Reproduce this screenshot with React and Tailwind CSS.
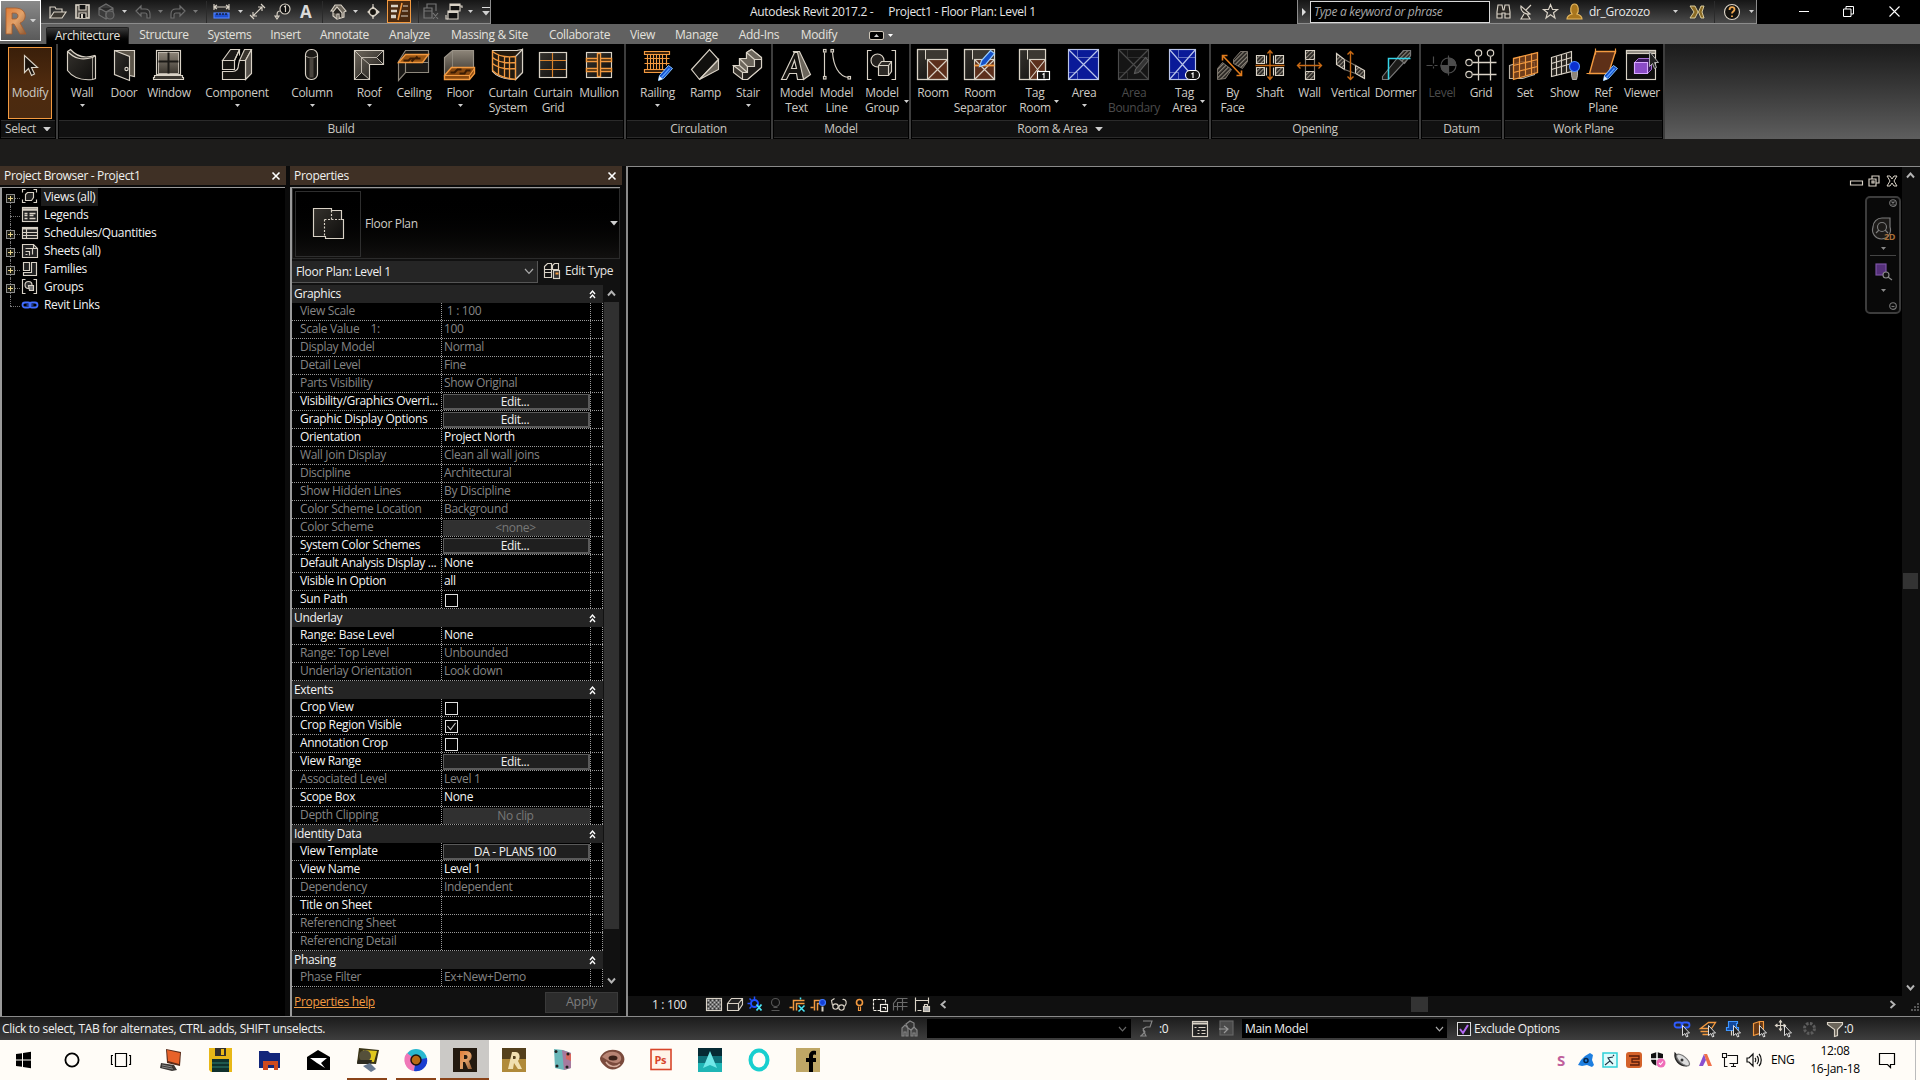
import React from "react";

const L = "#d9d2c6";
const O = "#f39a40";

/* ---------- shared bits ---------- */

function Ico({ s = 32, w, h, className = "", children, vb }) {
  return (
    <svg
      width={w || s}
      height={h || s}
      viewBox={vb || `0 0 ${w || s} ${h || s}`}
      fill="none"
      stroke={L}
      strokeWidth="1.150"
      className={"shrink-0 overflow-visible " + className}
    >
      {children}
    </svg>
  );
}

function Down({ className = "", color = "#cfcfcf", w = 6 }) {
  return (
    <svg width={w} height={w / 2 + 0.5} viewBox="0 0 6 3.5" className={"shrink-0 " + className}>
      <path d="M0 0h6L3 3.5z" fill={color} />
    </svg>
  );
}

function Pencil() {
  return (
    <g>
      <path d="M27 17l4 3-9 10-5 2 1-5z" fill="#1450c8" stroke="#8cc8ff" strokeWidth="1" />
      <path d="M28 20l-8 9" stroke="#5aa0ff" strokeWidth="1.300" />
      <path d="M18 27.500l3 3-4 1.500z" fill="#e8f4ff" stroke="none" />
    </g>
  );
}

function Defs() {
  return (
    <svg width="0" height="0" className="absolute">
      <defs>
        <linearGradient id="metal" x1="0" y1="0" x2="1" y2="1">
          <stop offset="0" stopColor="#6f685d" />
          <stop offset="1" stopColor="#1c1a18" />
        </linearGradient>
        <linearGradient id="dark" x1="0" y1="0" x2="1" y2="1">
          <stop offset="0" stopColor="#35322d" />
          <stop offset="1" stopColor="#0e0d0c" />
        </linearGradient>
        <linearGradient id="light" x1="0" y1="0" x2="0" y2="1">
          <stop offset="0" stopColor="#8d8579" />
          <stop offset="1" stopColor="#3a352e" />
        </linearGradient>
        <linearGradient id="bronze" x1="0" y1="0" x2="1" y2="1">
          <stop offset="0" stopColor="#e07c36" />
          <stop offset="0.5" stopColor="#e2a26a" />
          <stop offset="1" stopColor="#8f5a34" />
        </linearGradient>
        <pattern id="hatch" width="3" height="3" patternUnits="userSpaceOnUse" patternTransform="rotate(45)">
          <rect width="3" height="3" fill="#24211e" />
          <rect width="1.2" height="3" fill="#8e877c" />
        </pattern>
      </defs>
    </svg>
  );
}

/* ---------- ribbon icons, 32 x 32 ---------- */

const roomBox = (w = 30) => (
  <g>
    <rect x="1" y="1" width={w} height="30" fill="url(#dark)" />
    <rect x="9" y="1" width={w - 8} height="10" fill="#3c3832" stroke="none" />
    <path d="M9 1v10" strokeWidth="1" />
    <rect x="11" y="11" width={w - 10} height="20" fill="#5c2f1c" />
    <path d={`M11 11L${w + 1} 31M${w + 1} 11L11 31`} />
    <rect x="1" y="1" width={w} height="30" />
  </g>
);

const areaBox = (w, fill, c) => (
  <g stroke={c}>
    <rect x="1" y="1" width={w} height="30" fill={fill} />
    <path d={`M1 1l${w} 30M${w + 1} 1L1 31`} />
    <path d={`M10 1v8M10 9h${w - 9}M10 31v-7M1 24h9`} strokeWidth="0.7" opacity="0.7" />
  </g>
);

const icons = {
  modify: <path d="M11 7v17l4-4 3 7 3-1.500-3-6.500h6z" fill="#1a120c" />,
  wall: (
    <g>
      <path d="M2 3l3-2c7 8 15 9 24 6l1 1v22l-3 1C16 32 7 29 2 22z" fill="url(#dark)" />
      <path d="M2 3c7 7 14 9 25 6l3-2" />
      <path d="M27 9v22" strokeWidth="0.700" />
    </g>
  ),
  door: (
    <g>
      <path d="M7 2h20v26l-5-1" fill="#5c5549" />
      <path d="M7 2l15 6v24L7 26z" fill="url(#dark)" />
      <circle cx="19" cy="20.500" r="1.600" fill="#111" />
    </g>
  ),
  window: (
    <g>
      <rect x="4" y="2" width="24" height="24" fill="#15130f" />
      <rect x="6" y="4" width="20" height="21" fill="url(#light)" strokeWidth="0.800" />
      <path d="M16 4v21M6 13h20" stroke="#1c1a17" strokeWidth="2" />
      <path d="M2 27h28v2h1v2H1v-2h1z" fill="#3a3630" />
    </g>
  ),
  component: (
    <g>
      <path d="M2 12L10 1h9l-5 11z" fill="#1c1a18" />
      <path d="M19 12L24 1h7L25 12z" fill="#3a352e" />
      <path d="M25 12L31 1v24l-6 6z" fill="#55504a" />
      <path d="M2 12h12v9H2z" fill="#14120f" />
      <path d="M2 23h10c5 0 6-3 6-7l1-4h6v19H2z" fill="#14120f" />
      <path d="M14 12l5-11v6" />
    </g>
  ),
  column: (
    <g>
      <rect x="10" y="1" width="12" height="30" rx="5.500" fill="#1a1815" />
      <path d="M10 7c2 3 10 3 12 0" strokeWidth="0.700" />
      <rect x="14" y="9" width="4" height="20" fill="#4a453e" stroke="none" />
    </g>
  ),
  roof: (
    <g>
      <path d="M2 2h29v14H17v15H2z" fill="url(#metal)" />
      <path d="M2 31l7-7 8 7zM31 2l-7 7 7 7z" fill="#1a1815" strokeWidth="0.800" />
      <path d="M2 2l7 7v15M9 9h15M9 9l8 7" strokeWidth="0.800" />
    </g>
  ),
  ceiling: (
    <g>
      <path d="M1 13l7-11h23v22H8l-7 8z" fill="#191816" stroke="#8e887d" />
      <path d="M8 24V14h23" stroke="#8e887d" />
      <path d="M1 14L8 6h23l-6 8z" fill="#9a5512" stroke={O} strokeWidth="1.400" />
      <path d="M6 12h5l2-2h5l2-2M14 13l3-3h6" stroke="#3a1c04" strokeWidth="2" />
    </g>
  ),
  floor: (
    <g>
      <path d="M1 27V9l8-7h21v18H9z" fill="url(#light)" stroke="#9a9388" />
      <path d="M9 2v18" stroke="#9a9388" strokeWidth="0.700" />
      <path d="M1 27l7-8h23v6l-5 6H1z" fill="#8a4a10" stroke={O} strokeWidth="1.400" />
      <path d="M1 27h25l5-7M26 27v4" stroke={O} />
      <path d="M7 24h4l3-3h4M16 25h5l2-3h4" stroke="#3a1c04" strokeWidth="2" />
    </g>
  ),
  csystem: (
    <g>
      <path d="M1 2h24l6-1v23l-7 7C14 31 6 29 1 23z" fill="#22190e" />
      <path d="M24 8v23l7-7V1zM1 2h25" fill="#2b2824" />
      <path
        d="M1 3c6 5 14 6 23 5M1 9c6 5 14 6 23 5M1 15c6 5 14 6 23 5M1 22c6 6 14 8 23 9M1 2v20M7 6v21M13 8v21M18 8v22M24 8v23"
        stroke={O}
        strokeWidth="1.300"
      />
    </g>
  ),
  cgrid: (
    <g>
      <rect x="3" y="4" width="27" height="25" fill="url(#dark)" />
      <path d="M16 4v25M3 12h27M3 21h27" stroke="#d9822c" />
      <path d="M3 4h27v25H3z" />
    </g>
  ),
  mullion: (
    <g>
      <rect x="4" y="4" width="25" height="25" fill="url(#dark)" />
      <path d="M4 10h25v3H4zM4 20h25v3H4z" stroke={O} fill="#3a2208" strokeWidth="1.400" />
      <rect x="15" y="5" width="3" height="23" fill="#3a2208" stroke={O} strokeWidth="1.400" />
    </g>
  ),
  railing: (
    <g>
      <path d="M3 3h25v3H3zM3 10h25M3 15h25M3 21h20v3H3z" stroke={O} fill="#3a2008" />
      <path d="M6 6v15M9 6v15M12 6v15M15 6v15M18 6v15M21 6v15M25 6v11" stroke={O} />
      <Pencil />
    </g>
  ),
  ramp: (
    <g>
      <path d="M2 21L20 1l9 10-19 20z" fill="#11100e" />
      <path d="M10 31L29 11v10z" fill="#6b655b" />
    </g>
  ),
  stair: (
    <g>
      <path d="M2 17h6v-7h7V4l5-3 10 8v10L16 31h-5l-9-7z" fill="#3a352e" />
      <path d="M2 17l9 7h5v-6h7v-7h7V9L20 1l-5 3v6H8v7z" fill="#6b655b" />
      <path d="M8 10l8 8M15 4l8 7M8 17l8 7M11 24v7M11 24h5v-6h7v-7h7v8L16 31h-5z" fill="#1e1b18" />
    </g>
  ),
  mtext: (
    <g>
      <path d="M13 3h6l11 23-7 5-9-26z" fill="#6b655b" />
      <path d="M1 31L14 4h3l6 27h-6l-1-6h-7l-3 6zM11 20h5l-2-8z" fill="#14120f" />
    </g>
  ),
  mline: (
    <g>
      <path d="M4 4v24M12 4c1 13 6 24 16 25" />
      <g fill="#111">
        <rect x="3" y="1" width="2.500" height="2.500" />
        <rect x="3" y="28" width="2.500" height="2.500" />
        <rect x="10.500" y="1" width="2.500" height="2.500" />
        <rect x="27.500" y="28" width="2.500" height="2.500" />
      </g>
    </g>
  ),
  mgroup: (
    <g>
      <path d="M6 2H2v29h4M26 2h4v29h-4" />
      <circle cx="12" cy="12" r="6.500" fill="#24211e" />
      <path d="M13 17l3-4h10v10l-3 4H13z" fill="#2c2925" />
      <path d="M13 17h10v10M23 17l3-4" />
    </g>
  ),
  room: roomBox(30),
  roomsep: (
    <g>
      {roomBox(30)}
      <path d="M11 17h20" stroke={O} strokeWidth="1.800" />
      <path d="M27 2l4 3-9 11-6 2 2-6z" fill="#1450c8" stroke="#9cd0ff" />
    </g>
  ),
  tagroom: (
    <g>
      {roomBox(26)}
      <rect x="19" y="23" width="12" height="8" fill="#111" stroke="#fff" />
      <path d="M24 26l1.500-1v5" stroke="#fff" />
    </g>
  ),
  area: areaBox(30, "#0a1a98", "#b9c4ea"),
  areab: (
    <g>
      {areaBox(30, "#151515", "#4a4a4a")}
      <path d="M28 9l3 3-10 12-4 1 1-4z" fill="#333" stroke="#5a5a5a" />
    </g>
  ),
  tagarea: (
    <g>
      {areaBox(26, "#0a1a98", "#b9c4ea")}
      <rect x="17" y="22" width="14" height="9" rx="4.500" fill="#111" stroke="#fff" />
      <path d="M23 25.500l1.500-1v5" stroke="#fff" />
    </g>
  ),
  byface: (
    <g>
      <path d="M17 11l7-8h7v10l-5 7-9-5zM1 31V20l5-6 9 7-6 9z" fill="url(#hatch)" stroke="#8e877c" strokeWidth="0.800" />
      <path d="M6 7l19 20M6 12V7h5M20 27h5v-5" stroke="#e07b1c" strokeWidth="1.600" />
    </g>
  ),
  shaft: (
    <g>
      <g fill="url(#hatch)">
        <path d="M3 7h8v8H3zM22 7h8v8h-8zM3 19h8v8H3zM22 19h8v8h-8z" />
      </g>
      <path d="M13 7v8M20 7v8M13 19v8M20 19v8" />
      <path d="M16.500 2v29M2 17h29M14 5l2.500-3L19 5M14 28l2.500 3 2.500-3" stroke="#c96a14" strokeWidth="1.300" />
    </g>
  ),
  owall: (
    <g>
      <path d="M12 2h9v9h-9zM12 23h9v8h-9z" fill="url(#hatch)" />
      <path d="M12 11v12M21 11v12" stroke="#7a746a" />
      <path d="M4 17h24M7 14l-3 3 3 3M25 14l3 3-3 3" stroke="#c96a14" strokeWidth="1.400" />
    </g>
  ),
  vertical: (
    <g>
      <path d="M2 5l8 6v10l-8-5zM21 17l9 5v8l-9-5z" fill="url(#hatch)" />
      <path d="M10 11l11 6M10 21l11 4" stroke="#7a746a" />
      <path d="M16 3v28M13 6l3-3 3 3M13 28l3 3 3-3" stroke="#c96a14" strokeWidth="1.400" />
    </g>
  ),
  dormer: (
    <g>
      <path d="M3 28L24 2h7v5L9 31H3z" fill="#1b1a18" stroke="#777" />
      <path d="M18 9l6-7h7v5l-6 8z" fill="url(#hatch)" stroke="#777" />
      <path d="M9 31V10h22" stroke="#35d4e8" strokeWidth="1.500" />
    </g>
  ),
  level: (
    <g stroke="#4c4c4c">
      <circle cx="23" cy="17" r="7.500" />
      <path d="M23 9.500a7.500 7.500 0 017.500 7.500H23zM23 24.500a7.500 7.500 0 01-7.500-7.500H23z" fill="#4c4c4c" />
      <path d="M1 17h6M9 17h3M23 7v20M8 8v7M8 18v2" />
    </g>
  ),
  grid: (
    <g>
      <path d="M14 8v24M26 8v24M8 14h24M8 26h24" strokeWidth="1.300" />
      <g fill="#0a0a0a">
        <circle cx="14" cy="4.500" r="3.200" />
        <circle cx="26" cy="4.500" r="3.200" />
        <circle cx="4.500" cy="14" r="3.200" />
        <circle cx="4.500" cy="26" r="3.200" />
      </g>
    </g>
  ),
  set: (
    <g>
      <path d="M1 17l12-4 13 1v12l-12 4H1z" fill="#3a2418" stroke="#b9b1a4" />
      <path d="M5 10l24-6v20L5 31z" fill="#7a421c" fillOpacity="0.850" stroke={O} strokeWidth="1.300" />
      <path d="M11 8v21M17 7v20M23 5v21M5 17l24-6M5 24l24-6" stroke={O} />
    </g>
  ),
  show: (
    <g>
      <path d="M3 9l20-6v20L3 28z" fill="#24211d" />
      <path d="M8 8v19M13 6v20M18 5v19M3 15l20-6M3 21l20-6" />
      <path d="M23 22h6v5l-1 4h-4l-1-4z" fill="#8d8579" stroke="#ccc" strokeWidth="0.800" />
      <circle cx="26" cy="18" r="5" fill="#0a2fd0" stroke="#4f8dff" />
    </g>
  ),
  refplane: (
    <g>
      <path d="M9 3h20l-7 22H3z" fill="#5e3018" stroke={O} strokeWidth="1.400" />
      <path d="M9 0v6M29 0v5M0 25h6" stroke={O} />
      <Pencil />
    </g>
  ),
  viewer: (
    <g>
      <rect x="1" y="2" width="29" height="29" fill="#0f0e0d" />
      <rect x="1" y="2" width="29" height="3" fill="#8f8a80" />
      <path d="M9 14l4-4h13v11l-4 4H9z" fill="#3b1a5c" stroke="#c98aff" strokeWidth="0.800" />
      <path d="M9 14h13v11H9z" fill="#8b4cc6" stroke="#d9a8ff" />
      <path d="M24 3v15l3-3 2 5 2-1-2-5h4z" fill="#222" stroke="#bbb" strokeWidth="0.900" />
    </g>
  ),
};

function RibbonBtn({ icon, l1, l2, arrow, side, off, w }) {
  return (
    <div className={`relative flex shrink-0 flex-col items-center pt-[5px] ${w} ${off ? "text-[#4b4b4b]" : "text-[#cdcac4]"}`}>
      <Ico vb="0.5 0.5 32 32">{icons[icon]}</Ico>
      <div className="mt-[4px] flex flex-col items-center whitespace-nowrap leading-[15px]">
        <span>{l1}</span>
        {l2 && <span>{l2}</span>}
      </div>
      {arrow && <Down w={5} className="mt-[4px]" />}
      {side && <Down w={5} className={`absolute top-[56px] ${side}`} />}
    </div>
  );
}

function RibbonPanel({ title, w, menu, children }) {
  return (
    <div className={`flex h-[95px] shrink-0 flex-col border-r-2 border-[#3d3d3d] bg-black ${w}`}>
      <div className="flex h-[76px]">{children}</div>
      <div className="mx-px flex h-[18px] items-center justify-center gap-[7px] border-b border-t border-[#2b2b2b] bg-[#111111] text-[#c9c6c0]">
        {title}
        {menu && <Down w={8} />}
      </div>
    </div>
  );
}

/* ---------- title bar ---------- */

const Sep = ({ className = "" }) => <div className={`h-[22px] w-px bg-[#2b2b2b] ${className}`} />;

function QuickAccess() {
  return (
    <div className="flex h-6 w-[450px] items-center border-b border-r border-[#8c8c8c] bg-linear-to-b from-[#161616] to-[#4b4b4b]">
      <div className="box-content flex w-[24px] justify-center pl-[5px]">
        <Ico w={18} h={16}>
          <path d="M1 14V3h5l1 2h6v3" />
          <path d="M1 14L5 8h12l-4 6z" fill="#3a3630" />
        </Ico>
      </div>
      <div className="flex w-[25px] justify-center">
        <Ico s={15}>
          <rect x="1" y="1" width="13" height="13" fill="#55504a" strokeWidth="1.600" />
          <path d="M4 1v5h7V1M4 14V9h7v5" fill="#111" />
          <rect x="6" y="10" width="2" height="4" fill={L} stroke="none" />
        </Ico>
      </div>
      <div className="flex w-[24px] justify-center">
        <Ico s={17}>
          <g stroke="#6d6d6d">
            <path d="M1 5l7-4 7 4v7l-7 4-7-4zM1 5l7 4 7-4M8 9v7" fill="#3a3a3a" />
            <circle cx="12" cy="12" r="4" fill="#444" />
          </g>
        </Ico>
      </div>
      <div className="flex w-[12px] justify-center"><Down w={5} /></div>
      <div className="flex w-[24px] justify-center">
        <Ico w={16} h={14}><path d="M1 6l5-5v3h4c4 0 5 3 5 5v4h-3v-3c0-2-1-2-2-2H6v3z" stroke="#6d6d6d" fill="#2a2a2a" /></Ico>
      </div>
      <div className="flex w-[12px] justify-center"><Down w={5} color="#777" /></div>
      <div className="flex w-[24px] justify-center">
        <Ico w={16} h={14}><path d="M15 6l-5-5v3H6C2 4 1 7 1 9v4h3v-3c0-2 1-2 2-2h4v3z" stroke="#6d6d6d" fill="#2a2a2a" /></Ico>
      </div>
      <div className="flex w-[11px] justify-center"><Down w={5} color="#777" /></div>
      <Sep className="ml-[5px]" />
      <div className="flex w-[29px] justify-center">
        <Ico s={17}>
          <path d="M1 4h15M1 1v6M16 1v6M4 2L1 4l3 2M13 2l3 2-3 2" />
          <rect x="1" y="10" width="15" height="5" fill="#1e4fd0" stroke="#4f83ff" />
          <path d="M4 10v2M7 10v2M10 10v2M13 10v2" stroke="#111" />
        </Ico>
      </div>
      <div className="flex w-[8px] justify-center"><Down w={5} /></div>
      <div className="flex w-[28px] justify-center">
        <Ico s={17}><path d="M4 13L13 4M9 4h4v4M4 9v4h4M1 12l4 4M12 1l4 4" /></Ico>
      </div>
      <div className="flex w-[22px] justify-center">
        <Ico s={17}>
          <circle cx="11" cy="6" r="5" fill="#111" />
          <path d="M10 4l1.500-1v6M6 8c-3 0-3 2-3 6" />
          <path d="M1 13h4l-2 3z" />
        </Ico>
      </div>
      <div className="flex w-[24px] justify-center font-['Open_Sans'] text-[17px] font-bold leading-none text-[#d9d9d9]">A</div>
      <Sep className="ml-[4px]" />
      <div className="flex w-[31px] justify-center">
        <Ico s={17}>
          <path d="M1 8l4-6h6l5 6-2 1v5l-7 2-4-3V8z" fill="#6b655b" />
          <path d="M3 9l4-5 5 6v5M7 15v-4h2v5" fill="#26231f" />
        </Ico>
      </div>
      <div className="flex w-[4px] justify-center"><Down w={5} /></div>
      <div className="flex w-[32px] justify-center">
        <Ico w={15} h={17}>
          <path d="M2 9l5-5 6 5-6 5z" fill={L} />
          <circle cx="7" cy="9" r="3.500" fill="#15130f" />
          <path d="M7 1v3M7 14v2" />
        </Ico>
      </div>
      <div className="-ml-[2px] flex h-[23px] w-[24px] items-center justify-center border border-[#f39a40] bg-[#4a2a10]">
        <Ico s={19}>
          <path d="M1 4h7M1 9h6" strokeWidth="2.500" />
          <path d="M1 14.500h5" strokeWidth="3.500" />
          <path d="M13 4h5M12 9h6M11 14h7" />
          <path d="M12 1L8 18" stroke={O} strokeWidth="1.500" />
        </Ico>
      </div>
      <Sep className="ml-[7px]" />
      <div className="ml-[2px] flex w-[20px] justify-center">
        <Ico s={17}>
          <g stroke="#777"><path d="M4 5V1h9v7M1 5h8v10H1zM1 8h8M10 10l5 6M15 10l-5 6" /></g>
        </Ico>
      </div>
      <div className="flex w-[25px] justify-center">
        <Ico w={18} h={18}>
          <path d="M5 1h10v7H5z" fill="#111" />
          <path d="M3 8h10v8H3z" fill="#111" />
          <path d="M3 9h10M5 2h10" strokeWidth="2" />
          <path d="M15 3h2v2M1 12v4h2" />
        </Ico>
      </div>
      <div className="flex w-[9px] justify-center"><Down w={5} /></div>
      <div className="ml-[7px] flex flex-col items-center gap-[3px]">
        <div className="h-px w-[8px] bg-[#ddd]" />
        <Down w={8} />
      </div>
    </div>
  );
}

function SearchArea() {
  return (
    <div className="flex h-6 w-[460px] items-center border border-t-0 border-[#8c8c8c] bg-linear-to-b from-[#161616] to-[#4b4b4b]">
      <div className="flex w-[12px] justify-center">
        <svg width="4" height="8"><path d="M0 0l4 4-4 4z" fill="#ddd" /></svg>
      </div>
      <div className="flex h-[22px] w-[180px] items-center border border-[#d9d9d9] bg-black pl-[3px] italic text-[#a8a8a8]">
        Type a keyword or phrase
      </div>
      <div className="ml-px flex w-[24px] justify-center">
        <Ico s={17}><path d="M2 9l1-7h4l1 5h1l1-5h4l1 7v6h-5v-5H7v5H2zM2 11h5M10 11h5" fill="#2b2824" /></Ico>
      </div>
      <div className="flex w-[23px] justify-center">
        <Ico s={17}><path d="M3 3c-1 5 4 9 9 8zM8 7l5-5M6 11l-3 5h9l-3-5" fill="#2b2824" /></Ico>
      </div>
      <div className="flex w-[24px] justify-center">
        <Ico s={17}><path d="M8.500 1.500l2 5h5l-4 3.200 1.500 5.300-4.500-3.200L4 15l1.500-5.300-4-3.200h5z" /></Ico>
      </div>
      <div className="flex w-[25px] justify-center">
        <Ico s={17}>
          <path d="M1 16c0-3 2-4 5-5-2-2-2-10 2.500-10S13 9 11 11c3 1 5 2 5 5z" fill="#a8761e" stroke="#e5b860" />
        </Ico>
      </div>
      <span className="ml-[2px] w-[80px] text-[#e8e8e8]">dr_Grozozo</span>
      <div className="flex w-[12px] justify-center"><Down w={5} /></div>
      <div className="flex w-[32px] justify-center">
        <Ico s={16}>
          <path d="M1 2h5l3 6-3 6H1l4-6zM15 2h-3L9.500 8l2.500 6h3l-2-6z" fill="#8a6a24" stroke="#e5d8a8" strokeWidth="0.900" />
        </Ico>
      </div>
      <Sep className="ml-[1px]" />
      <div className="flex w-[34px] justify-center">
        <Ico s={18}>
          <circle cx="9" cy="9" r="7.500" fill="#15130f" />
          <path d="M6.500 7c0-4 5-3.500 5-.5 0 2-2.500 2-2.500 4M9 12.500v1.500" stroke="#f0a850" strokeWidth="1.800" />
        </Ico>
      </div>
      <Down w={5} />
    </div>
  );
}

function TitleBar() {
  return (
    <div className="flex h-6 bg-black">
      <div className="w-[41px]" />
      <QuickAccess />
      <div className="ml-[259px] flex h-[23px] w-[547px] items-center gap-[15px] whitespace-pre text-[#e6e6e6]">
        <span>Autodesk Revit 2017.2 -</span>
        <span>Project1 - Floor Plan: Level 1</span>
      </div>
      <SearchArea />
      <div className="flex flex-1 items-center pb-[2px] pl-[41px]">
        <div className="flex w-[11px] justify-center"><div className="h-px w-[10px] bg-white" /></div>
        <Ico s={11} className="ml-[34px]"><path d="M.5 3h7.500v7.500H.5zM3 3V.5h7.500V8H8" stroke="#fff" strokeWidth="1" /></Ico>
        <Ico s={11} className="ml-[35px]"><path d="M.5.5l10 10M10.500.5l-10 10" stroke="#fff" strokeWidth="1.100" /></Ico>
      </div>
    </div>
  );
}

const tabs = [
  ["Structure", "w-[68px]"],
  ["Systems", "w-[63px]"],
  ["Insert", "w-[49px]"],
  ["Annotate", "w-[69px]"],
  ["Analyze", "w-[61px]"],
  ["Massing & Site", "w-[99px]"],
  ["Collaborate", "w-[81px]"],
  ["View", "w-[45px]"],
  ["Manage", "w-[63px]"],
  ["Add-Ins", "w-[62px]"],
  ["Modify", "w-[58px]"],
];

function TabBar() {
  return (
    <div className="flex h-5 items-end bg-[#616161] pl-[46px] text-[#e4e2de]">
      <div className="flex h-[17px] w-[83px] items-center justify-center rounded-t-[2px] border border-b-0 border-[#222] bg-linear-to-b from-[#3a3a3a] to-black">
        Architecture
      </div>
      <div className="w-px" />
      {tabs.map(([t, w]) => (
        <div key={t} className={`flex h-[19px] items-center justify-center whitespace-nowrap ${w}`}>{t}</div>
      ))}
      <div className="ml-[21px] flex h-[18px] items-center gap-[4px]">
        <div className="flex h-[9px] w-[15px] items-center justify-center rounded-[2px] border border-[#d0c8ba] bg-black">
          <Down w={5} className="rotate-180" />
        </div>
        <Down w={5} color="#fff" />
      </div>
    </div>
  );
}

function Ribbon() {
  return (
    <div className="flex h-[95px] bg-linear-to-b from-[#1b1b1b] to-[#5e5e5e]">
      <RibbonPanel title="Select" menu w="w-[58px]">
        <div className="ml-[8px] mt-[3px] flex h-[72px] w-[44px] flex-col items-center border border-[#f39a40] bg-linear-to-b from-[#3a1f0a] via-[#4e2a0e] to-[#4a2a10] pt-[1px] text-[#cdcac4]">
          <Ico vb="0.5 0.5 32 32">{icons.modify}</Ico>
          <span className="mt-[4px] leading-[15px]">Modify</span>
        </div>
      </RibbonPanel>
      <RibbonPanel title="Build" w="w-[568px]">
        <RibbonBtn icon="wall" l1="Wall" arrow w="w-[48px]" />
        <RibbonBtn icon="door" l1="Door" w="w-[36px]" />
        <RibbonBtn icon="window" l1="Window" w="w-[54px]" />
        <RibbonBtn icon="component" l1="Component" arrow w="w-[82px]" />
        <RibbonBtn icon="column" l1="Column" arrow w="w-[68px]" />
        <RibbonBtn icon="roof" l1="Roof" arrow w="w-[46px]" />
        <RibbonBtn icon="ceiling" l1="Ceiling" w="w-[44px]" />
        <RibbonBtn icon="floor" l1="Floor" arrow w="w-[48px]" />
        <RibbonBtn icon="csystem" l1="Curtain" l2="System" w="w-[48px]" />
        <RibbonBtn icon="cgrid" l1="Curtain" l2="Grid" w="w-[42px]" />
        <RibbonBtn icon="mullion" l1="Mullion" w="w-[50px]" />
      </RibbonPanel>
      <RibbonPanel title="Circulation" w="w-[147px]">
        <RibbonBtn icon="railing" l1="Railing" arrow w="w-[63px]" />
        <RibbonBtn icon="ramp" l1="Ramp" w="w-[33px]" />
        <RibbonBtn icon="stair" l1="Stair" arrow w="w-[52px]" />
      </RibbonPanel>
      <RibbonPanel title="Model" w="w-[138px]">
        <RibbonBtn icon="mtext" l1="Model" l2="Text" w="w-[47px]" />
        <RibbonBtn icon="mline" l1="Model" l2="Line" w="w-[33px]" />
        <RibbonBtn icon="mgroup" l1="Model" l2="Group" side="right-[2px]" w="w-[58px]" />
      </RibbonPanel>
      <RibbonPanel title="Room & Area" menu w="w-[300px]">
        <RibbonBtn icon="room" l1="Room" w="w-[44px]" />
        <RibbonBtn icon="roomsep" l1="Room" l2="Separator" w="w-[50px]" />
        <RibbonBtn icon="tagroom" l1="Tag" l2="Room" side="right-[6px]" w="w-[60px]" />
        <RibbonBtn icon="area" l1="Area" arrow w="w-[38px]" />
        <RibbonBtn icon="areab" l1="Area" l2="Boundary" off w="w-[62px]" />
        <RibbonBtn icon="tagarea" l1="Tag" l2="Area" side="-right-[1px]" w="w-[39px]" />
      </RibbonPanel>
      <RibbonPanel title="Opening" w="w-[210px]">
        <RibbonBtn icon="byface" l1="By" l2="Face" w="w-[43px]" />
        <RibbonBtn icon="shaft" l1="Shaft" w="w-[32px]" />
        <RibbonBtn icon="owall" l1="Wall" w="w-[47px]" />
        <RibbonBtn icon="vertical" l1="Vertical" w="w-[35px]" />
        <RibbonBtn icon="dormer" l1="Dormer" w="w-[55px]" />
      </RibbonPanel>
      <RibbonPanel title="Datum" w="w-[83px]">
        <RibbonBtn icon="level" l1="Level" off w="w-[42px]" />
        <RibbonBtn icon="grid" l1="Grid" w="w-[36px]" />
      </RibbonPanel>
      <RibbonPanel title="Work Plane" w="w-[161px]">
        <RibbonBtn icon="set" l1="Set" w="w-[42px]" />
        <RibbonBtn icon="show" l1="Show" w="w-[37px]" />
        <RibbonBtn icon="refplane" l1="Ref" l2="Plane" w="w-[40px]" />
        <RibbonBtn icon="viewer" l1="Viewer" w="w-[38px]" />
      </RibbonPanel>
    </div>
  );
}

/* ---------- docked panels ---------- */

function PanelHeader({ title }) {
  return (
    <div className="flex h-[19px] shrink-0 items-center justify-between bg-[#3f3025] pl-[4px] pr-[6px] text-[#f0f0f0]">
      {title}
      <Ico s={8}><path d="M.5.5l7 7M7.500.5l-7 7" stroke="#fff" strokeWidth="1.600" /></Ico>
    </div>
  );
}

const treeIcons = {
  views: (
    <g>
      <path d="M1 4V1h3M12 1h3v3M15 11v3h-3M4 14H1v-3" />
      <path d="M4 6l2-2h6v5l-2 3H4z" fill="#222" />
    </g>
  ),
  legends: (
    <g>
      <rect x="1" y="1" width="15" height="14" fill="#222" />
      <path d="M1 3h15" strokeWidth="2.500" />
      <path d="M3 7h3M8 7h6M8 9h4M3 12h3M8 12h6M3 9h3" strokeWidth="1.500" />
    </g>
  ),
  sched: (
    <g>
      <rect x="1" y="3" width="15" height="11" fill="#222" />
      <path d="M1 4h15" strokeWidth="2" />
      <path d="M1 8h15M1 11h15M5 3v11" />
    </g>
  ),
  sheets: (
    <g>
      <path d="M1 2h11l4 4v9H1z" fill="#222" />
      <path d="M4 6h7v6M4 9h4v4M4 12h2M12 2v4h4" />
    </g>
  ),
  families: (
    <g>
      <path d="M2 2h6v8H2z" fill="#222" />
      <path d="M10 2h5v13H2v-3h8z" fill="#222" />
    </g>
  ),
  groups: (
    <g>
      <path d="M4 1H1v14h3M12 1h3v14h-3" />
      <circle cx="7" cy="6.500" r="3.500" fill="#333" />
      <path d="M7 7h5v5H8z" fill="#777" />
    </g>
  ),
  links: (
    <g stroke="#3f6cff" strokeWidth="1.800">
      <rect x="1" y="6" width="8" height="5" rx="2.500" />
      <rect x="8" y="6" width="8" height="5" rx="2.500" />
      <path d="M5 8.500h7" strokeWidth="1" />
    </g>
  ),
};

const tree = [
  ["Views (all)", "views", true],
  ["Legends", "legends", false],
  ["Schedules/Quantities", "sched", true],
  ["Sheets (all)", "sheets", true],
  ["Families", "families", true],
  ["Groups", "groups", true],
  ["Revit Links", "links", false],
];

function ProjectBrowser() {
  return (
    <div className="flex w-[286px] flex-col">
      <PanelHeader title="Project Browser - Project1" />
      <div className="mr-px mt-[2px] flex-1 border-l-2 border-t border-[#9a9a9a] bg-black">
        {tree.map(([label, icon, plus], i) => (
          <div key={label} className="flex h-[18px] items-center text-[#f2f2f2]">
            <div className="relative flex h-[18px] w-[20px] shrink-0 items-center pl-[4px]">
              <div className={`absolute left-[8px] w-0 border-l border-dotted border-[#777] ${i === 0 ? "top-[10px] h-[8px]" : i === 6 ? "top-0 h-[10px]" : "top-0 h-[18px]"}`} />
              <div className="absolute left-[8px] top-[10px] w-[10px] border-t border-dotted border-[#777]" />
              {plus && (
                <div className="relative mt-[3px] flex size-[9px] items-center justify-center border border-[#8c8c8c] bg-[#1c1c14]">
                  <div className="absolute h-px w-[5px] bg-[#e6d38a]" />
                  <div className="absolute h-[5px] w-px bg-[#e6d38a]" />
                </div>
              )}
            </div>
            <Ico s={16} vb="0.5 0.5 16 16">{treeIcons[icon]}</Ico>
            <span className={`ml-[3px] h-[18px] px-[3px] leading-[17px] ${i === 0 ? "bg-[#1c1c1c]" : ""}`}>{label}</span>
          </div>
        ))}
      </div>
    </div>
  );
}

/* type: t = text, b = button, B = disabled button, c / C = checkbox off / on; last flag marks a greyed row */
const props = [
  ["#", "Graphics"],
  ["View Scale", "\u00a01 : 100", "t", 1],
  ["Scale Value    1:", "100", "t", 1],
  ["Display Model", "Normal", "t", 1],
  ["Detail Level", "Fine", "t", 1],
  ["Parts Visibility", "Show Original", "t", 1],
  ["Visibility/Graphics Overri...", "Edit...", "b"],
  ["Graphic Display Options", "Edit...", "b"],
  ["Orientation", "Project North", "t"],
  ["Wall Join Display", "Clean all wall joins", "t", 1],
  ["Discipline", "Architectural", "t", 1],
  ["Show Hidden Lines", "By Discipline", "t", 1],
  ["Color Scheme Location", "Background", "t", 1],
  ["Color Scheme", "<none>", "B", 1],
  ["System Color Schemes", "Edit...", "b"],
  ["Default Analysis Display ...", "None", "t"],
  ["Visible In Option", "all", "t"],
  ["Sun Path", "", "c"],
  ["#", "Underlay"],
  ["Range: Base Level", "None", "t"],
  ["Range: Top Level", "Unbounded", "t", 1],
  ["Underlay Orientation", "Look down", "t", 1],
  ["#", "Extents"],
  ["Crop View", "", "c"],
  ["Crop Region Visible", "", "C"],
  ["Annotation Crop", "", "c"],
  ["View Range", "Edit...", "b"],
  ["Associated Level", "Level 1", "t", 1],
  ["Scope Box", "None", "t"],
  ["Depth Clipping", "No clip", "B", 1],
  ["#", "Identity Data"],
  ["View Template", "DA - PLANS 100", "b"],
  ["View Name", "Level 1", "t"],
  ["Dependency", "Independent", "t", 1],
  ["Title on Sheet", "", "t"],
  ["Referencing Sheet", "", "t", 1],
  ["Referencing Detail", "", "t", 1],
  ["#", "Phasing"],
  ["Phase Filter", "Ex+New+Demo", "t", 1],
];

function PropValue({ value, type }) {
  if (type === "b" || type === "B")
    return (
      <div
        className={`ml-px mt-[1px] flex h-[16px] w-[147px] items-center justify-center border pr-[2px] ${
          type === "b"
            ? "border-b-2 border-r-2 border-[#5a5a5a] bg-[#1f1f1f] text-[#f0f0f0]"
            : "border-[#333] bg-[#303030] text-[#787878]"
        }`}
      >
        {value}
      </div>
    );
  if (type === "c" || type === "C")
    return (
      <div className="ml-[3px] mt-[3px] flex size-[13px] items-center justify-center border border-[#e0e0e0]">
        {type === "C" && <Ico s={11}><path d="M1.500 5l3 3.500 5-6.500" stroke="#ccc" /></Ico>}
      </div>
    );
  return <span className="pl-[2px]">{value}</span>;
}

function PropRow({ row }) {
  if (row[0] === "#")
    return (
      <div className="flex h-[18px] items-center justify-between bg-[#242424] pl-[2px] pr-[7px] text-[#f2f2f2]">
        {row[1]}
        <Ico w={7} h={9}><path d="M1 4l2.500-3L6 4M1 8l2.500-3L6 8" stroke="#fff" strokeWidth="1.400" /></Ico>
      </div>
    );
  const [label, value, type, off] = row;
  return (
    <div className={`flex h-[18px] border-b border-dotted border-[#9a9a9a] leading-[16px] ${off ? "text-[#858585]" : "text-[#f4f4f4]"}`}>
      <div className="w-[149px] shrink-0 overflow-hidden whitespace-pre pl-[8px]">{label}</div>
      <div className="w-[149px] shrink-0 border-l border-dotted border-[#9a9a9a]">
        <PropValue value={value} type={type} />
      </div>
      <div className="flex-1 border-l border-r border-dotted border-[#9a9a9a]" />
    </div>
  );
}

const Chevron = ({ dir, className = "" }) => (
  <Ico s={9} className={className}>
    <path
      d={{ up: "M1 6.500L4.500 2.500 8 6.500", down: "M1 2.500l3.500 4 3.500-4", left: "M6.500 1L2.500 4.500l4 3.500", right: "M2.500 1l4 3.500-4 3.500" }[dir]}
      stroke="#b5b5b5"
      strokeWidth="1.900"
    />
  </Ico>
);

function Properties() {
  return (
    <div className="ml-[4px] flex w-[332px] flex-col">
      <PanelHeader title="Properties" />
      <div className="mr-[2px] mt-[2px] flex flex-1 flex-col border-l-2 border-t border-[#9a9a9a] bg-[#111111]">
        <div className="flex h-[71px] items-center border border-[#2b2b2b] bg-linear-to-b from-black to-[#11100f] pl-[2px]">
          <div className="flex h-[66px] w-[66px] items-center justify-center border border-[#2e2e2e]">
            <Ico s={32} vb="0.5 0.5 32 32">
              <path d="M2 1h18v2h10v9h2v19H14v-2H2z" fill="url(#dark)" />
              <path d="M20 3v9M13 12v17M13 12h17" strokeDasharray="2 1.500" />
            </Ico>
          </div>
          <span className="ml-[4px] flex-1 text-[#d0cdc7]">Floor Plan</span>
          <Down w={8} className="mr-[1px]" />
        </div>
        <div className="mt-[2px] flex h-[22px]">
          <div className="flex w-[246px] items-center justify-between border-b border-r border-[#555] bg-[#252525] pl-[4px] pr-[3px] text-[#f0f0f0]">
            Floor Plan: Level 1
            <Ico w={10} h={7}><path d="M1 1l4 4.500L9 1" stroke="#aaa" /></Ico>
          </div>
          <div className="flex items-center pb-[2px] pl-[6px] text-[#e6e4e0]">
            <Ico s={17} vb="0.5 0.5 17 17">
              <path d="M1 4l3-3h4v6H1zM9 3l2-2h4v6H9zM1 10h7v5H1zM1 7v3M8 7v3" />
              <rect x="10" y="8" width="6" height="8" fill="#333" />
              <path d="M12 11h3" stroke={O} strokeWidth="2" />
            </Ico>
            <span className="ml-[4px]">Edit Type</span>
          </div>
        </div>
        <div className="mt-[2px] flex h-[703px]">
          <div className="w-[311px] overflow-hidden bg-black">
            {props.map((r, i) => (
              <PropRow key={i} row={r} />
            ))}
          </div>
          <div className="flex w-[16px] flex-col items-center pl-px">
            <div className="flex h-[17px] items-center"><Chevron dir="up" /></div>
            <div className="w-[15px] flex-1 bg-[#303030]" />
            <div className="flex h-[59px] items-end pb-[3px]"><Chevron dir="down" /></div>
          </div>
        </div>
        <div className="flex flex-1 items-center justify-between pl-[2px] pr-[2px]">
          <span className="text-[#f39a40] underline">Properties help</span>
          <div className="flex h-[21px] w-[73px] items-center justify-center border border-[#3a3a3a] bg-[#2c2c2c] text-[12.500px] text-[#7d7d7d]">Apply</div>
        </div>
      </div>
    </div>
  );
}

/* ---------- drawing area ---------- */

const viewIcons = [
  <g key="a"><rect x="1" y="2" width="15" height="12" fill="#333" /><path d="M2 4h13M2 8h13M2 12h13" strokeDasharray="2 2" stroke="#bbb" strokeWidth="2" /><path d="M4 6h11M4 10h11" strokeDasharray="2 2" stroke="#bbb" strokeWidth="2" /></g>,
  <g key="b"><path d="M1 7l4-5h11v6l-4 6H1zM1 7h11v7M12 7l4-5" fill="#222" /></g>,
  <g key="c"><circle cx="7" cy="7" r="3.500" fill="#111" stroke="#2050ff" strokeWidth="2" /><path d="M7 0v3M0 7h3M2 2l2 2M2 12l2-2" stroke="#2050ff" strokeWidth="1.500" /><path d="M9 8l5 6M14 8l-5 6" stroke="#49e6f5" strokeWidth="1.800" /></g>,
  <g key="d" stroke="#555"><circle cx="8" cy="6" r="4" /><path d="M6 11h4M4 14h8" /></g>,
  <g key="e"><path d="M1 11h3M5 14V4h11M8 14V7h8" stroke={O} strokeWidth="1.500" /><path d="M10 9l6 6M16 9l-6 6M12 1v2" stroke="#49e6f5" strokeWidth="1.500" /></g>,
  <g key="f"><path d="M1 11h3M5 14V4h8M8 14V7h3" stroke={O} strokeWidth="1.500" /><circle cx="13" cy="6" r="3" fill="#1440d8" stroke="#3f78ff" /><path d="M13 10v5" strokeWidth="2" /></g>,
  <g key="g"><circle cx="5" cy="10" r="2.700" /><circle cx="11" cy="11" r="2.700" /><path d="M2 9l-1-5 3-2M14 10c3-3 2-8-2-7" /></g>,
  <g key="h"><circle cx="8" cy="6" r="3" stroke={O} strokeWidth="1.600" /><path d="M7 10v4h2v-4" stroke={O} /></g>,
  <g key="i" stroke="#f0ece4"><rect x="2" y="3" width="12" height="11" strokeDasharray="3 1" /><rect x="9" y="8" width="7" height="7" fill="#111" /><path d="M11 11h3v2" /></g>,
  <g key="j" stroke="#6a6a6a"><path d="M1 14V7l4-5h10M5 14V6h10M10 14V2M1 10h14" /></g>,
  <g key="k"><path d="M2 1v14M15 1v6M2 4h13M4 14h4" /><rect x="10" y="10" width="6" height="5" fill="#aaa" /><path d="M11 10V8h3v2" /></g>,
];

function Canvas() {
  return (
    <div className="ml-[4px] flex flex-1 flex-col border-l-2 border-t border-[#8a8a8a] bg-black">
      <div className="flex flex-1">
        <div className="flex flex-1 flex-col items-end">
          <div className="mr-[4px] mt-[7px] flex h-[13px] items-center">
            <Ico w={13} h={6} className="mt-[4px]"><path d="M.5 1h12v4H.5z" /></Ico>
            <Ico s={12} className="ml-[5px]"><path d="M1 4h7v7H1zM4 4V1h7v7H8" /><path d="M4 6h2v2H4z" /></Ico>
            <Ico s={12} className="ml-[6px]"><path d="M1 1h3l2 3 2-3h3L8 6l3 5H8L6 8l-2 3H1l3-5z" strokeWidth="1" /></Ico>
          </div>
          <div className="mr-[1px] mt-[9px] flex h-[118px] w-[36px] flex-col items-center rounded-[5px] border-2 border-[#3c3c3c] bg-[#090909] text-[#8a8a8a]">
            <Ico s={8} className="mr-[2px] mt-[1px] self-end"><circle cx="4" cy="4" r="3.300" stroke="#777" /><path d="M2.500 2.500l3 3M5.500 2.500l-3 3" stroke="#777" /></Ico>
            <Ico w={26} h={26} className="ml-[2px] mt-[9px]">
              <path d="M2 11a9 9 0 019-9h8v9a9 9 0 11-17 0z" stroke="#7c7c7c" fill="#1c1a18" />
              <circle cx="11" cy="11" r="4.500" stroke="#7c7c7c" />
              <path d="M14 14l3 3M8 14l-3 3" stroke="#7c7c7c" />
              <text x="13" y="24" fontSize="9" fontWeight="bold" fontFamily="Open Sans" fill="#a8703a" stroke="none">2D</text>
            </Ico>
            <Down w={5} color="#888" className="mt-[5px]" />
            <div className="mt-[5px] h-px w-[26px] shrink-0 bg-[#444]" />
            <Ico w={18} h={18} className="ml-[2px] mt-[7px]">
              <rect x="1" y="1" width="10" height="11" fill="#55307a" stroke="#7e55a8" />
              <circle cx="11" cy="12" r="3" stroke="#8a8a8a" fill="#111" />
              <path d="M13 14l4 3" stroke="#8a8a8a" />
            </Ico>
            <Down w={5} color="#888" className="mt-[8px]" />
            <Ico s={8} className="mr-[2px] mt-[10px] self-end"><circle cx="4" cy="4" r="3.300" stroke="#777" /><path d="M2.500 4.500h3" stroke="#777" /></Ico>
          </div>
        </div>
        <div className="flex w-[18px] flex-col items-center justify-between bg-[#101010] py-[4px] pr-[2px]">
          <Chevron dir="up" />
          <div className="mb-[1px] h-[16px] w-[15px] bg-[#333]" />
          <Chevron dir="down" />
        </div>
      </div>
      <div className="flex h-[20px] items-center bg-[#101010] pb-[3px] text-[#e6e6e6]">
        <span className="ml-[24px] w-[54px]">1 : 100</span>
        <div className="flex gap-[4.800px]">
          {viewIcons.map((g, i) => (
            <Ico key={i} s={16} vb="0.5 0.5 16 16">{g}</Ico>
          ))}
        </div>
        <Chevron dir="left" className="ml-[9px]" />
        <div className="ml-[463px] h-[15px] w-[17px] bg-[#333]" />
        <Chevron dir="right" className="ml-[460px]" />
        <Ico s={9} className="ml-[14px] mt-[6px]"><path d="M6 1h2M3 4h2M6 4h2M0 7h2M3 7h2M6 7h2" stroke="#555" strokeWidth="2" /></Ico>
      </div>
    </div>
  );
}

/* ---------- status bar ---------- */

const cursor = <path d="M9 5v10l2.500-2 1.500 3.500 1.500-.7-1.500-3.300h3z" fill="#222" stroke="#eee" strokeWidth="0.900" />;

const pickers = [
  <g key="1"><g stroke="#2f5cff" strokeWidth="1.800"><rect x="1" y="2" width="8" height="5" rx="2.500" /><rect x="8" y="2" width="8" height="5" rx="2.500" /></g>{cursor}</g>,
  <g key="2"><path d="M1 8l8-6h7l-4 6zM1 11h9M3 14h7" stroke={O} strokeWidth="1.300" />{cursor}</g>,
  <g key="3"><path d="M4 1h9v2h-1v4h2v3H2V7h2V3z" fill="#12489c" stroke="#3f96ff" /><path d="M7 10v5" />{cursor}</g>,
  <g key="4"><path d="M3 3l6-2v12l-6 2zM9 1h4v10" fill="#6a3a14" stroke={O} />{cursor}</g>,
  <g key="5"><path d="M5 0v10M0 5h10M3.500 2L5 0l1.500 2M3.500 8L5 10l1.500-2M2 3.500L0 5l2 1.500M8 3.500L10 5 8 6.500" />{cursor}</g>,
  <g key="6"><circle cx="8" cy="8" r="5" stroke="#5c5c5c" strokeWidth="3" strokeDasharray="2.500 1.400" /></g>,
  <g key="7"><path d="M1 2h15v2l-5 5v6l-3 1V9L1 4z" fill="#6b655b" /></g>,
];

function StatusBar() {
  return (
    <div className="flex h-6 items-center border-t border-[#8a8a8a] bg-linear-to-b from-[#1c1c1c] to-[#3e3e3e] text-[#f0f0f0]">
      <span className="w-[900px] pl-[2px]">Click to select, TAB for alternates, CTRL adds, SHIFT unselects.</span>
      <Ico s={19}>
        <g stroke="#888">
          <path d="M2 17V9l3-3 3 3v8H6v-4H4v4zM11 17v-6l3-3 3 3v6h-2v-3h-2v3z" fill="#444" />
          <path d="M6 5l4-3 4 2v4l-3 3-3-2z" fill="#333" />
        </g>
      </Ico>
      <div className="ml-[8px] flex h-[19px] w-[204px] items-center justify-end bg-black pr-[4px]">
        <Ico w={9} h={6}><path d="M1 1l3.500 4L8 1" stroke="#666" /></Ico>
      </div>
      <Ico s={17} className="ml-[7px]"><g stroke="#888"><path d="M5 1h9l-2 6H8l-3 2 2 3-4 4M2 16h6l-3-6" /></g></Ico>
      <span className="ml-[4px] w-[32px]">:0</span>
      <Ico s={18} vb="0.5 0.5 18 18">
        <rect x="2" y="2" width="15" height="15" fill="#222" />
        <path d="M2 4h15" strokeWidth="2" />
        <path d="M4 8h2M8 8h7M7 11h2M11 11h4M7 14h2M11 14h4" />
      </Ico>
      <Ico s={17} className="ml-[9px]"><rect x="2" y="1" width="13" height="14" fill="#4a4a4a" stroke="#666" /><path d="M1 9h8M6 6l4 3-4 4" stroke="#999" /></Ico>
      <div className="ml-[7px] flex h-[19px] w-[205px] items-center justify-between bg-black pl-[3px] pr-[3px]">
        Main Model
        <Ico w={9} h={6}><path d="M1 1l3.500 4L8 1" stroke="#aaa" /></Ico>
      </div>
      <div className="ml-[10px] flex size-[14px] items-center justify-center border border-[#ddd] bg-[#1a1a1a]">
        <Ico s={12}><path d="M2 6l3 4 5-8" stroke="#b268f0" strokeWidth="2" /></Ico>
      </div>
      <span className="ml-[3px] w-[200px]">Exclude Options</span>
      <div className="flex gap-[9.500px]">
        {pickers.map((g, i) => (
          <Ico key={i} s={16} vb="0.5 0.5 16 16">{g}</Ico>
        ))}
      </div>
      <span className="ml-[1px]">:0</span>
    </div>
  );
}

/* ---------- taskbar ---------- */

const taskIcons = [
  <path key="start" d="M4 6l6-.8v6.300H4zM11 5l8-1.200v7.700h-8zM4 12.500h6v6.300L4 18zM11 12.500h8v7.700l-8-1.200z" fill="#000" stroke="none" />,
  <circle key="cort" cx="12" cy="12" r="6.600" stroke="#000" strokeWidth="1.800" />,
  <path key="tv" d="M6.500 5.500h11v13h-11zM4 7.500H2.500v9H4M20 7.500h1.500v9H20" stroke="#000" strokeWidth="1.200" />,
  <g key="pc" stroke="none"><path d="M7 1l15 3-1 14-13-3z" fill="#5a2a18" /><path d="M8 2l13 3-1 11-11-3z" fill="#e8622a" /><path d="M2 15l13 2 3 5-5 1L1 20z" fill="#3a3634" /><path d="M3 17l10 2M3 19l11 2" stroke="#999" strokeWidth="0.800" /></g>,
  <g key="fl" stroke="none"><path d="M1 0h23v24H3l-2-2z" fill="#e8b818" /><rect x="7" y="0" width="11" height="8" fill="#33302a" /><rect x="13" y="1" width="3" height="6" fill="#e8b818" /><rect x="4" y="11" width="17" height="13" fill="#10302c" /><path d="M4 15h17M4 19h17" stroke="#2f8070" /></g>,
  <g key="ex" stroke="none"><path d="M2 3h9l2 2h10v15H2z" fill="#12267a" /><path d="M6 13h15v9h-4v-5h-6v5H6z" fill="#cf4a1e" /></g>,
  <g key="mail" stroke="none"><path d="M1 9l11-7 12 7v13H1z" fill="#000" /><path d="M4 10h17l-6 5 4 5-8-5z" fill="#fff" /></g>,
  <g key="rd" stroke="none"><path d="M4 0l20 2-3 14-19-1z" fill="#3a3416" /><path d="M8 2l14 1-3 11-12-1z" fill="#e0c81e" /><circle cx="10" cy="8" r="6" fill="#55503a" /><path d="M3 12h14l-1 4H2z" fill="#2c2a20" /><path d="M8 18l7-3 6 6-5 3z" fill="#67788f" /></g>,
  <g key="cr" stroke="none"><circle cx="12" cy="12" r="11" fill="#28b8d0" /><path d="M12 12L3 5a11 11 0 007 18z" fill="#f078b8" /><path d="M12 12l11-2a11 11 0 01-13 13z" fill="#1b3ed0" /><circle cx="12" cy="12" r="5" fill="#b86a14" stroke="#1a1210" strokeWidth="1.500" /></g>,
  <g key="rv" stroke="none"><rect width="24" height="24" fill="#231a10" /><path fillRule="evenodd" d="M7 3h6c7 0 7 8 3 10l3 8h-4l-3-7h-2v7H7zM11 7v4h2c2 0 2-4 0-4z" fill="url(#bronze)" /></g>,
  <g key="rv2" stroke="none"><rect width="24" height="24" fill="#b08a3a" /><rect width="24" height="11" fill="#54401c" /><path fillRule="evenodd" d="M10 4h4c5 1 4 7 2 9l4 8h-4l-4-6-1 6H6zM11 8v3h2c1 0 1-3 0-3z" fill="#f0dfb0" /></g>,
  <g key="cube" stroke="none"><path d="M3 1l9 1 8 3v15l-7 2-9-2z" fill="#6ab7b9" /><path d="M11 2l9 3v15l-7 2z" fill="#a77a9e" /><path d="M15 5l5 1v7l-5-2z" fill="#d8685e" /><g fill="#222"><circle cx="5" cy="3.500" r="1.500" /><circle cx="17" cy="6" r="1.500" /><circle cx="6" cy="18" r="1.500" /><circle cx="16" cy="19" r="1.500" /></g></g>,
  <g key="knot" stroke="none"><path d="M0 10C3 2 12 0 19 3c6 3 7 10 3 14-4 5-12 6-16 2C3 16 0 14 0 10z" fill="#7a4a3c" /><path d="M2 9c4-6 14-7 18-2 3 4 0 8-4 8S7 12 2 9z" fill="#b88474" /><ellipse cx="13" cy="10" rx="4.500" ry="2.500" fill="#3a2018" /><path d="M6 14c3 5 10 6 14 2" stroke="#d8b0a0" strokeWidth="1.500" /></g>,
  <g key="ps"><rect x="2" y="1.500" width="20" height="20" fill="#fff4e8" stroke="#d8452a" strokeWidth="1.600" /><text x="5.500" y="16" fontSize="11" fontWeight="bold" fontFamily="Open Sans" fill="#d8452a" stroke="none">Ps</text></g>,
  <g key="a3" stroke="none"><rect width="24" height="24" fill="#062a34" /><rect y="8" width="24" height="16" fill="#0e6f78" /><rect y="15" width="24" height="9" fill="#1fb5b5" /><path d="M12 3l7 17-7-3-7 3z" fill="#6fe8e8" /></g>,
  <ellipse key="op" cx="12" cy="12" rx="8.500" ry="9.500" stroke="#18cfcf" strokeWidth="4" />,
  <g key="fb" stroke="none"><rect width="24" height="24" fill="#bfa766" /><path d="M13 24V14h-3v-4h3V8c0-4 3-6 7-5v4c-3-1-3 0-3 2v1h3v4h-3v10z" fill="#000" /></g>,
];

const trayIcons = [
  <text key="s" x="3" y="13.500" fontSize="15" fontWeight="bold" fontFamily="Open Sans" fill="#c0609c" stroke="none">S</text>,
  <g key="av" stroke="none"><path d="M7 4l5-3 3 2-1 5 2 5-2 2-5-2-5 1-4-1 3-5z" fill="#1e7fe0" /><circle cx="8" cy="8.500" r="2" stroke="#06264a" strokeWidth="1.500" /></g>,
  <g key="ru"><rect x="1" y="1" width="14" height="14" fill="#dffcfc" stroke="#2fd0d8" strokeWidth="1.500" /><path d="M3 13l5-4-2-3 5-1M8 9l3 3M11 3l1 1" stroke="#234" /></g>,
  <g key="or" stroke="none"><rect x="0" y="0" width="16" height="16" rx="3" fill="#d4622a" /><path d="M3 4h10v3H6v3h7v3H4" stroke="#5a1d0a" strokeWidth="1.300" /></g>,
  <g key="sh" stroke="none"><path d="M7 0l6 2v5c0 4-3 6-6 7-3-1-6-3-6-7V2z" fill="#111" /><path d="M7 0v15M1 7h12" stroke="#fff" strokeWidth="1.500" /><circle cx="11" cy="11" r="4.500" fill="#f06cb8" /><path d="M9 11l1.500 1.500L13 9.500" stroke="#fff" /></g>,
  <g key="di"><path d="M1 1c-1 7 4 13 11 13z" fill="#444" stroke="#222" /><ellipse cx="9" cy="8" rx="3.500" ry="8" transform="rotate(-50 9 8)" fill="#ddd" stroke="#777" /><circle cx="8" cy="8" r="1.500" fill="#333" stroke="none" /></g>,
  <g key="ad" stroke="none"><path d="M1 14L6 2l2 6-3 6z" fill="#8a4fd0" /><path d="M6 2h3l5 12h-4z" fill="#f0704a" /></g>,
  <g key="net" stroke="#111" strokeWidth="1.100"><path d="M5.500 3.500h10v8h-8M9 14.500h5M11.500 12v3M.5 1.500h4v4h-4zM2.500 6v8.500h3" /></g>,
  <g key="vol" stroke="#111" strokeWidth="1.200"><path d="M1 6h2l4-4v12L3 10H1zM9 6c1 1 1 3 0 4M11 4c2 2 2 6 0 8M13 2c3 3 3 9 0 12" /></g>,
];

function Taskbar() {
  return (
    <div className="flex h-[40px] bg-[#fffcf7] text-black">
      {taskIcons.map((g, i) => (
        <div
          key={i}
          className={`relative flex h-[40px] shrink-0 items-center justify-center ${i < 2 ? "w-[48px]" : i === 2 ? "w-[50px]" : "w-[49px]"} ${i === 9 ? "bg-[#cbc9c6]" : ""}`}
        >
          <Ico s={24}>{g}</Ico>
          {(i === 7 || i === 8) && <div className="absolute bottom-0 h-[2px] w-[40px] bg-[#8a4318]" />}
          {i === 9 && <div className="absolute bottom-0 h-[2px] w-full bg-[#8a4318]" />}
        </div>
      ))}
      <div className="ml-auto flex items-center">
        <div className="flex gap-[8px]">
          {trayIcons.map((g, i) => (
            <Ico key={i} s={16}>{g}</Ico>
          ))}
        </div>
        <span className="ml-[9px] w-[24px]">ENG</span>
        <div className="ml-[14px] flex w-[52px] flex-col items-center whitespace-nowrap leading-[18px]">
          <span>12:08</span>
          <span>16-Jan-18</span>
        </div>
        <Ico s={17} className="ml-[18px]"><path d="M.5 1.500h15v11h-4v3l-3-3h-8z" stroke="#000" strokeWidth="1.200" /></Ico>
        <div className="ml-[19px] h-[40px] w-px bg-[#bbb]" />
        <div className="w-[4px]" />
      </div>
    </div>
  );
}

export default function App() {
  return (
    <div className="relative flex h-[1080px] w-[1920px] flex-col overflow-hidden bg-[#0b0b0b] font-['Open_Sans','Noto_Sans',sans-serif] text-[12px] tracking-[-0.320px]">
      <Defs />
      <TitleBar />
      <TabBar />
      <div className="absolute left-0 top-0 flex h-[41px] w-[41px] items-center justify-center gap-[3px] border border-white bg-linear-to-b from-[#8a8a8a] to-[#5a5a5a]">
        <svg width="22" height="28" viewBox="0 0 22 28">
          <path fillRule="evenodd" d="M1 1h9c12 0 13 12 5 15l6 11h-6L9 17H7v10H1zM7 6v6h3c4 0 4-6 0-6z" fill="url(#bronze)" stroke="#a85a28" strokeWidth="0.800" />
        </svg>
        <Down w={6} />
      </div>
      <Ribbon />
      <div className="h-[27px] shrink-0 bg-[#1d1c1b]" />
      <div className="flex h-[850px] shrink-0">
        <ProjectBrowser />
        <Properties />
        <Canvas />
      </div>
      <StatusBar />
      <Taskbar />
    </div>
  );
}
